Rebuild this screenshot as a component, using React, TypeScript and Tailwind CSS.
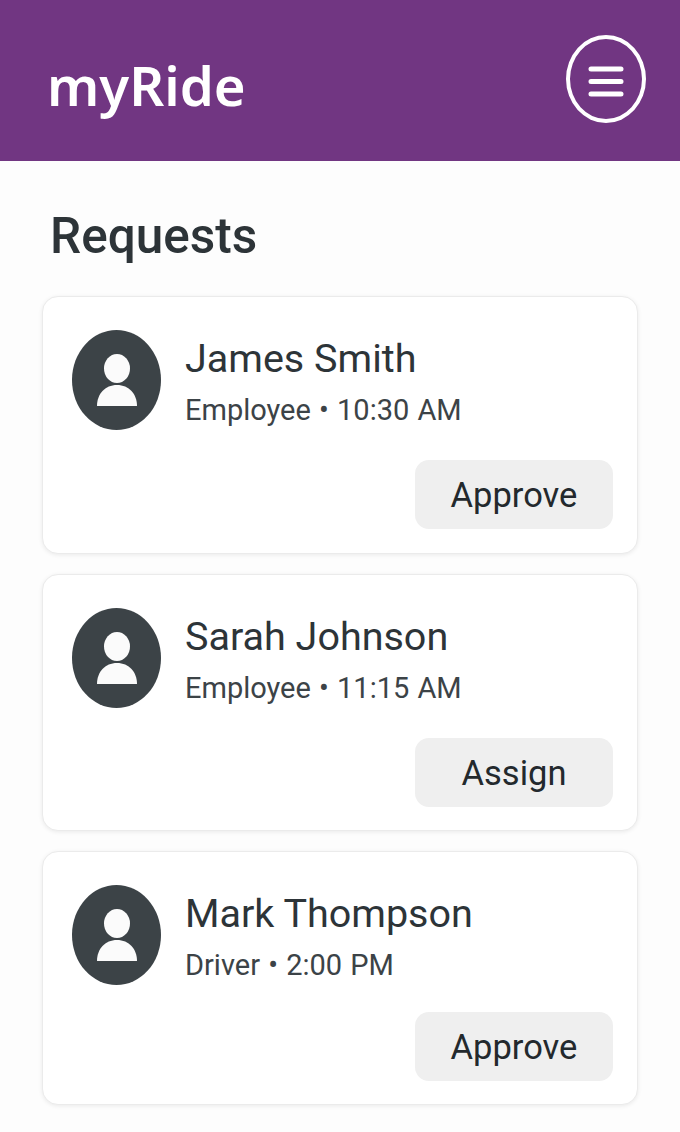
const requests = [
  { name: "James Smith", info: "Employee • 10:30 AM", action: "Approve", height: "h-[258px]", gap: "mt-[30px]" },
  { name: "Sarah Johnson", info: "Employee • 11:15 AM", action: "Assign", height: "h-[257px]", gap: "mt-[30px]" },
  { name: "Mark Thompson", info: "Driver • 2:00 PM", action: "Approve", height: "h-[254px]", gap: "mt-[27px]" },
];

const Avatar = () => (
  <div className="w-[89px] h-[100px] shrink-0 rounded-[50%] bg-[#3c4347] flex items-center justify-center">
    <svg width="44" height="52" viewBox="0 0 44 52" fill="#fbfbfb">
      <ellipse cx="22" cy="14.500" rx="13" ry="14.500" />
      <path d="M2 52c0-12 8-21 20-21s20 9 20 21z" />
    </svg>
  </div>
);

const Card = ({ name, info, action, height, gap }: (typeof requests)[number]) => (
  <div className={`${height} rounded-[16px] border border-[#ebebeb] bg-white shadow-[0_1px_4px_rgba(0,0,0,0.08)] pl-[29px] pr-[24px] pt-[33px]`}>
    <div className="flex">
      <Avatar />
      <div className="ml-[24px]">
        <h3 className="text-[39.500px] leading-[56px] mt-[1px] text-[#2d3438] font-normal">{name}</h3>
        <p className="text-[29px] leading-[38px] mt-[4px] text-[#3c4347] [word-spacing:1px]">{info}</p>
      </div>
    </div>
    <div className={`flex justify-end ${gap}`}>
      <button className="w-[198px] h-[69px] pt-[2px] rounded-[14px] bg-[#efefef] text-[34.500px] text-[#23292d]">{action}</button>
    </div>
  </div>
);

export default function App() {
  return (
    <div className="w-[680px] h-[1132px] overflow-hidden bg-[#fdfdfd] font-['Roboto',sans-serif]">
      <header className="h-[161px] bg-[#713682] flex items-start justify-between pl-[47px] pr-[34px] pt-[35px]">
        <span className="text-[54.500px] leading-[74px] mt-[13px] font-semibold text-white font-['Noto_Sans',sans-serif]">myRide</span>
        <button className="w-[80px] h-[88px] rounded-[50%] border-[4px] border-white flex items-center justify-center">
          <svg className="mt-[3px]" width="36" height="32" viewBox="0 0 36 32" stroke="white" strokeWidth="5" strokeLinecap="round">
            <path d="M3 4h30M3 16.500h30M3 29h30" />
          </svg>
        </button>
      </header>
      <main className="px-[42px]">
        <h2 className="text-[49.500px] font-medium text-[#2d3438] pl-[8px] pt-[42px] pb-[27px] leading-[66px]">Requests</h2>
        <div className="flex flex-col gap-[20px]">
          {requests.map((r) => (
            <Card key={r.name} {...r} />
          ))}
        </div>
      </main>
    </div>
  );
}
